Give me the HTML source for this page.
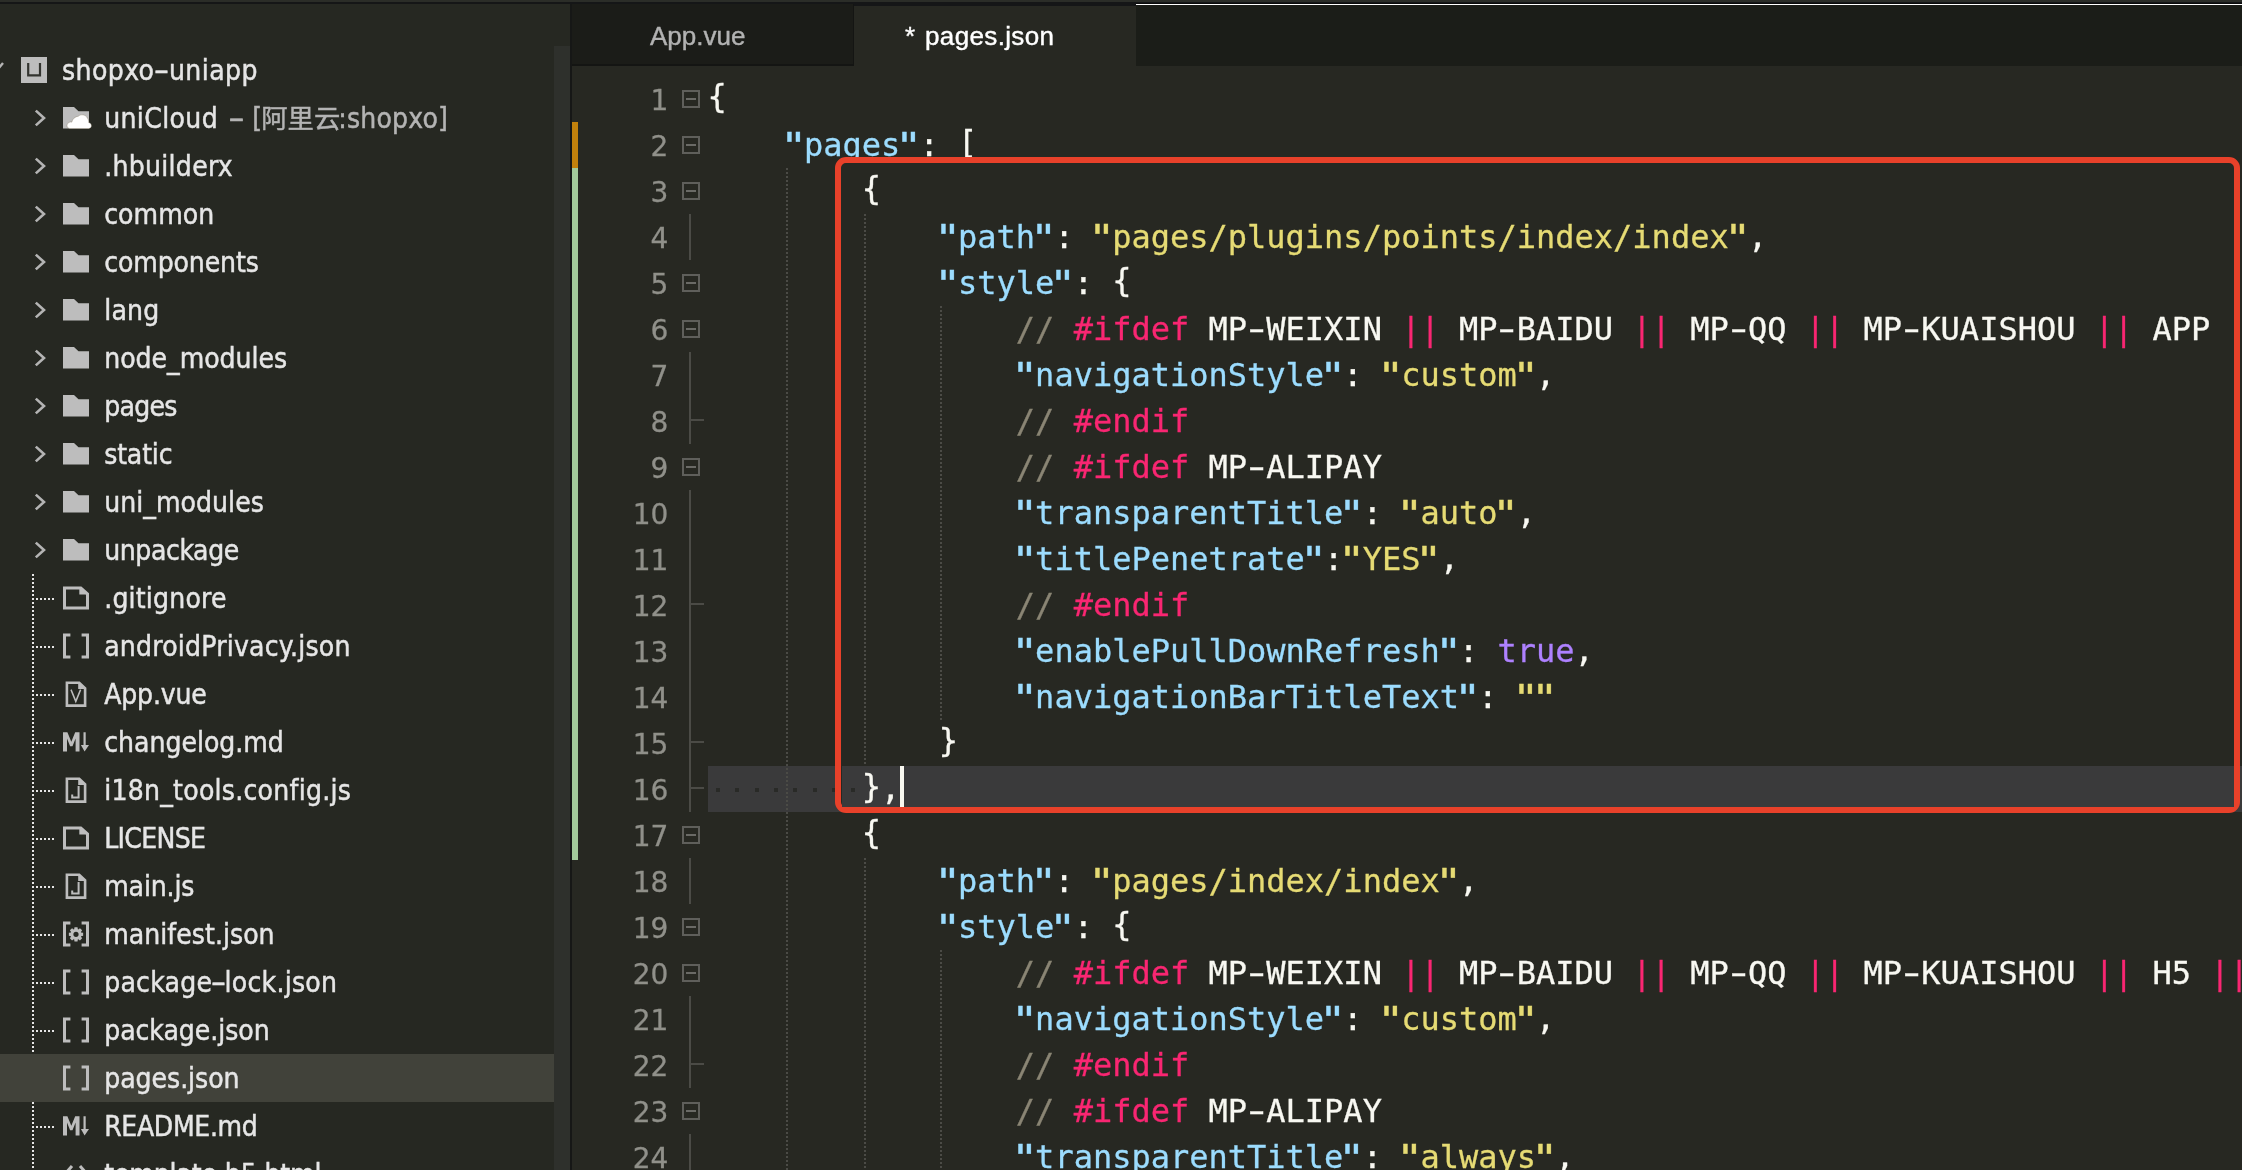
<!DOCTYPE html><html><head><meta charset="utf-8"><title>pages.json</title><style>
*{margin:0;padding:0;box-sizing:border-box}
html,body{width:2242px;height:1170px;overflow:hidden;background:#272822}
body{position:relative;font-family:"DejaVu Sans Condensed","DejaVu Sans","Liberation Sans","Noto Sans CJK SC",sans-serif}
.abs{position:absolute}
#side{will-change:transform;position:absolute;left:0;top:4px;width:570px;height:1166px;background:#262822;overflow:hidden}
.row{position:absolute;left:0;width:554px;height:48px}
.row .t{position:absolute;top:0.5px;line-height:47px;font-size:28px;color:#e6e6e6;white-space:nowrap;font-stretch:condensed;-webkit-text-stroke:0.45px}
.row svg{position:absolute;overflow:visible}
.sel{background:#41423a}
.dim{color:#b4b4b4}
.hy{display:inline-block}
.cj{font-family:"Noto Sans CJK SC",sans-serif;font-size:26.3px;line-height:1}
#ed{will-change:transform;position:absolute;left:572px;top:66px;width:1670px;height:1104px;background:#272822;overflow:hidden}
.ln{position:absolute;left:0;width:96.3px;-webkit-text-stroke:0.3px;text-align:right;font-family:"DejaVu Sans","Liberation Sans",sans-serif;font-size:28px;line-height:46px;color:#90908a;height:46px}
.cl{position:absolute;left:135.6px;height:46px;line-height:46px;font-family:"DejaVu Sans Mono","Liberation Mono",monospace;font-size:32px;white-space:pre;color:#f8f8f2;-webkit-text-stroke:0.3px;transform:scaleY(1.01);transform-origin:0 34px}
.k{color:#9cdcfe}.s{color:#e6db74}.c{color:#8a8574}.p{color:#f92672}.v{color:#ae81ff}
.h{display:inline-block;transform:scaleX(1.55)}.q{display:inline-block;transform:translateX(-1px) scale(1.42,1.12);transform-origin:50% 35%}.b{position:relative;top:-3px}
.fb{position:absolute;left:110px;width:18px;height:18px;border:2px solid #5f5f5b}
.fb:after{content:"";position:absolute;left:2px;top:6px;width:10px;height:2px;background:#6a6a66}
.fv{position:absolute;left:117px;width:2px;height:46px;background:#4b4b46}
.ft{position:absolute;left:117px;width:15px;height:2px;background:#4b4b46}
.g{position:absolute;width:2px;background:repeating-linear-gradient(to bottom,#4b4b46 0 2px,transparent 2px 4px)}
.tab{-webkit-text-stroke:0.4px;will-change:transform;position:absolute;font-family:"Liberation Sans",sans-serif;font-size:26px;white-space:nowrap}
</style></head><body>
<div class="abs" style="left:0;top:0;width:2242px;height:2px;background:#2b2d28"></div>
<div class="abs" style="left:0;top:2px;width:2242px;height:4px;background:#151617"></div>
<div class="abs" style="left:0;top:4px;width:854px;height:2px;background:#1b1c18"></div>
<div id="side">
<div class="abs" style="left:554px;top:42px;width:16px;height:1124px;background:#2e302c"></div>
<div class="abs" style="left:32px;top:570px;width:2px;height:600px;background:repeating-linear-gradient(to bottom,#e6e6e6 0 2px,transparent 2px 4px)"></div>
<div class="abs" style="left:36px;top:594px;width:18px;height:2px;background:repeating-linear-gradient(to right,#e6e6e6 0 2px,transparent 2px 4px)"></div>
<div class="abs" style="left:36px;top:642px;width:18px;height:2px;background:repeating-linear-gradient(to right,#e6e6e6 0 2px,transparent 2px 4px)"></div>
<div class="abs" style="left:36px;top:690px;width:18px;height:2px;background:repeating-linear-gradient(to right,#e6e6e6 0 2px,transparent 2px 4px)"></div>
<div class="abs" style="left:36px;top:738px;width:18px;height:2px;background:repeating-linear-gradient(to right,#e6e6e6 0 2px,transparent 2px 4px)"></div>
<div class="abs" style="left:36px;top:786px;width:18px;height:2px;background:repeating-linear-gradient(to right,#e6e6e6 0 2px,transparent 2px 4px)"></div>
<div class="abs" style="left:36px;top:834px;width:18px;height:2px;background:repeating-linear-gradient(to right,#e6e6e6 0 2px,transparent 2px 4px)"></div>
<div class="abs" style="left:36px;top:882px;width:18px;height:2px;background:repeating-linear-gradient(to right,#e6e6e6 0 2px,transparent 2px 4px)"></div>
<div class="abs" style="left:36px;top:930px;width:18px;height:2px;background:repeating-linear-gradient(to right,#e6e6e6 0 2px,transparent 2px 4px)"></div>
<div class="abs" style="left:36px;top:978px;width:18px;height:2px;background:repeating-linear-gradient(to right,#e6e6e6 0 2px,transparent 2px 4px)"></div>
<div class="abs" style="left:36px;top:1026px;width:18px;height:2px;background:repeating-linear-gradient(to right,#e6e6e6 0 2px,transparent 2px 4px)"></div>
<div class="abs" style="left:36px;top:1074px;width:18px;height:2px;background:repeating-linear-gradient(to right,#e6e6e6 0 2px,transparent 2px 4px)"></div>
<div class="abs" style="left:36px;top:1122px;width:18px;height:2px;background:repeating-linear-gradient(to right,#e6e6e6 0 2px,transparent 2px 4px)"></div>
<div class="abs" style="left:36px;top:1170px;width:18px;height:2px;background:repeating-linear-gradient(to right,#e6e6e6 0 2px,transparent 2px 4px)"></div>
<div class="row" style="top:42px">
<svg style="left:-9px;top:16px" width="14" height="12" viewBox="0 0 14 12"><path d="M0 3 L5.5 9 L12 1" fill="none" stroke="#b4b4b4" stroke-width="2.4"/></svg>
<svg style="left:21px;top:11px" width="26" height="26" viewBox="0 0 26 26"><rect width="26" height="26" fill="#bdbdbd"/><path d="M7.2 6 V18.4 H19 V6" fill="none" stroke="#33342f" stroke-width="2.2"/></svg>
<span class="t" style="left:62px;letter-spacing:0.417px">shopxo<span class="hy" style="margin:0 2.5px;transform:scaleX(1.7)">-</span>uniapp</span>
</div>
<div class="row" style="top:90px">
<svg style="left:33px;top:14px" width="14" height="20" viewBox="0 0 14 20"><path d="M2.8 2.6 L11 10 L2.8 17.4" fill="none" stroke="#b4b4b4" stroke-width="2.6" stroke-linecap="butt" stroke-linejoin="miter"/></svg>
<svg style="left:63px;top:13px" width="30" height="24" viewBox="0 0 30 24"><path d="M0 0 H11 L15.5 4.2 H26 V21.5 H0 Z" fill="#bdbdbd"/><path d="M8 21.6 C4.6 21.6 3.6 19.6 4.2 17.6 C4.8 15.6 6.8 14.6 8.8 15.2 C9.4 12 12 9.6 15.4 9.2 C18 7 22.4 7.4 24.4 11 C25.4 12.6 25.8 14.4 25.6 15.6 C27.8 16.2 28.8 17.8 28.4 19.4 C28 20.8 26.8 21.6 25 21.6 Z" fill="#ffffff" stroke="#6b5a3c" stroke-opacity=".35" stroke-width=".8"/></svg>
<span class="t" style="left:104.2px;letter-spacing:0.000px"><span style="letter-spacing:.37px">uniCloud</span><span class="dim"><span class="hy" style="margin:0 11px 0 14px;transform:scaleX(1.8)">-</span>[<span class="cj" style="margin:0 -2px 0 -0.7px">阿里云</span><span style="letter-spacing:.2px">:shopxo]</span></span></span>
</div>
<div class="row" style="top:138px">
<svg style="left:33px;top:14px" width="14" height="20" viewBox="0 0 14 20"><path d="M2.8 2.6 L11 10 L2.8 17.4" fill="none" stroke="#b4b4b4" stroke-width="2.6" stroke-linecap="butt" stroke-linejoin="miter"/></svg>
<svg style="left:63px;top:13px" width="26" height="22" viewBox="0 0 26 22"><path d="M0 0 H11 L15.5 4.2 H26 V21.5 H0 Z" fill="#bdbdbd"/></svg>
<span class="t" style="left:104.2px;letter-spacing:0.289px">.hbuilderx</span>
</div>
<div class="row" style="top:186px">
<svg style="left:33px;top:14px" width="14" height="20" viewBox="0 0 14 20"><path d="M2.8 2.6 L11 10 L2.8 17.4" fill="none" stroke="#b4b4b4" stroke-width="2.6" stroke-linecap="butt" stroke-linejoin="miter"/></svg>
<svg style="left:63px;top:13px" width="26" height="22" viewBox="0 0 26 22"><path d="M0 0 H11 L15.5 4.2 H26 V21.5 H0 Z" fill="#bdbdbd"/></svg>
<span class="t" style="left:104.2px;letter-spacing:0.080px">common</span>
</div>
<div class="row" style="top:234px">
<svg style="left:33px;top:14px" width="14" height="20" viewBox="0 0 14 20"><path d="M2.8 2.6 L11 10 L2.8 17.4" fill="none" stroke="#b4b4b4" stroke-width="2.6" stroke-linecap="butt" stroke-linejoin="miter"/></svg>
<svg style="left:63px;top:13px" width="26" height="22" viewBox="0 0 26 22"><path d="M0 0 H11 L15.5 4.2 H26 V21.5 H0 Z" fill="#bdbdbd"/></svg>
<span class="t" style="left:104.2px;letter-spacing:-0.111px">components</span>
</div>
<div class="row" style="top:282px">
<svg style="left:33px;top:14px" width="14" height="20" viewBox="0 0 14 20"><path d="M2.8 2.6 L11 10 L2.8 17.4" fill="none" stroke="#b4b4b4" stroke-width="2.6" stroke-linecap="butt" stroke-linejoin="miter"/></svg>
<svg style="left:63px;top:13px" width="26" height="22" viewBox="0 0 26 22"><path d="M0 0 H11 L15.5 4.2 H26 V21.5 H0 Z" fill="#bdbdbd"/></svg>
<span class="t" style="left:104.2px;letter-spacing:0.200px">lang</span>
</div>
<div class="row" style="top:330px">
<svg style="left:33px;top:14px" width="14" height="20" viewBox="0 0 14 20"><path d="M2.8 2.6 L11 10 L2.8 17.4" fill="none" stroke="#b4b4b4" stroke-width="2.6" stroke-linecap="butt" stroke-linejoin="miter"/></svg>
<svg style="left:63px;top:13px" width="26" height="22" viewBox="0 0 26 22"><path d="M0 0 H11 L15.5 4.2 H26 V21.5 H0 Z" fill="#bdbdbd"/></svg>
<span class="t" style="left:104.2px;letter-spacing:0.000px">node_modules</span>
</div>
<div class="row" style="top:378px">
<svg style="left:33px;top:14px" width="14" height="20" viewBox="0 0 14 20"><path d="M2.8 2.6 L11 10 L2.8 17.4" fill="none" stroke="#b4b4b4" stroke-width="2.6" stroke-linecap="butt" stroke-linejoin="miter"/></svg>
<svg style="left:63px;top:13px" width="26" height="22" viewBox="0 0 26 22"><path d="M0 0 H11 L15.5 4.2 H26 V21.5 H0 Z" fill="#bdbdbd"/></svg>
<span class="t" style="left:104.2px;letter-spacing:-0.700px">pages</span>
</div>
<div class="row" style="top:426px">
<svg style="left:33px;top:14px" width="14" height="20" viewBox="0 0 14 20"><path d="M2.8 2.6 L11 10 L2.8 17.4" fill="none" stroke="#b4b4b4" stroke-width="2.6" stroke-linecap="butt" stroke-linejoin="miter"/></svg>
<svg style="left:63px;top:13px" width="26" height="22" viewBox="0 0 26 22"><path d="M0 0 H11 L15.5 4.2 H26 V21.5 H0 Z" fill="#bdbdbd"/></svg>
<span class="t" style="left:104.2px;letter-spacing:-0.160px">static</span>
</div>
<div class="row" style="top:474px">
<svg style="left:33px;top:14px" width="14" height="20" viewBox="0 0 14 20"><path d="M2.8 2.6 L11 10 L2.8 17.4" fill="none" stroke="#b4b4b4" stroke-width="2.6" stroke-linecap="butt" stroke-linejoin="miter"/></svg>
<svg style="left:63px;top:13px" width="26" height="22" viewBox="0 0 26 22"><path d="M0 0 H11 L15.5 4.2 H26 V21.5 H0 Z" fill="#bdbdbd"/></svg>
<span class="t" style="left:104.2px;letter-spacing:0.060px">uni_modules</span>
</div>
<div class="row" style="top:522px">
<svg style="left:33px;top:14px" width="14" height="20" viewBox="0 0 14 20"><path d="M2.8 2.6 L11 10 L2.8 17.4" fill="none" stroke="#b4b4b4" stroke-width="2.6" stroke-linecap="butt" stroke-linejoin="miter"/></svg>
<svg style="left:63px;top:13px" width="26" height="22" viewBox="0 0 26 22"><path d="M0 0 H11 L15.5 4.2 H26 V21.5 H0 Z" fill="#bdbdbd"/></svg>
<span class="t" style="left:104.2px;letter-spacing:-0.400px">unpackage</span>
</div>
<div class="row" style="top:570px">
<svg style="left:63px;top:12px" width="26" height="24" viewBox="0 0 26 24"><path d="M1.5 1.9 H17.8 L24.5 8 V22 H1.5 Z" fill="none" stroke="#bdbdbd" stroke-width="3"/><path d="M16.3 1.5 V8.6 H25 Z" fill="#bdbdbd"/></svg>
<span class="t" style="left:104.2px;letter-spacing:0.200px">.gitignore</span>
</div>
<div class="row" style="top:618px">
<svg style="left:63px;top:11px" width="26" height="26" viewBox="0 0 26 26"><path d="M7.4 1.9 H1.5 V24.1 H7.4 M18.6 1.9 H24.5 V24.1 H18.6" fill="none" stroke="#bdbdbd" stroke-width="3"/></svg>
<span class="t" style="left:104.2px;letter-spacing:0.222px">androidPrivacy.json</span>
</div>
<div class="row" style="top:666px">
<svg style="left:65px;top:11px" width="22" height="26" viewBox="0 0 22 26"><path d="M1.9 1.7 H14.2 L20.1 7.2 V24.6 H1.9 Z" fill="none" stroke="#bdbdbd" stroke-width="2.6"/><path d="M13.2 1.4 V8 H20.8 Z" fill="#bdbdbd"/><path d="M6 8.6 L10.8 20.4 L15.6 8.6" fill="none" stroke="#bdbdbd" stroke-width="1.5"/></svg>
<span class="t" style="left:104.2px;letter-spacing:-0.167px">App.vue</span>
</div>
<div class="row" style="top:714px">
<svg style="left:63px;top:14px" width="27" height="20" viewBox="0 0 27 20"><path d="M0 19.6 V0.2 H4.4 L8.3 9.8 L12.2 0.2 H16.5 V19.6 H12.6 V6.6 L9.5 14.2 H7.1 L4 6.6 V19.6 Z" fill="#bdbdbd"/><path d="M20.5 0.2 H22.7 V13 H26 L21.6 19.6 L17.9 13 H20.5 Z" fill="#bdbdbd"/></svg>
<span class="t" style="left:104.2px;letter-spacing:0.000px">changelog.md</span>
</div>
<div class="row" style="top:762px">
<svg style="left:65px;top:11px" width="22" height="26" viewBox="0 0 22 26"><path d="M1.9 1.7 H14.2 L20.1 7.2 V24.6 H1.9 Z" fill="none" stroke="#bdbdbd" stroke-width="2.6"/><path d="M13.2 1.4 V8 H20.8 Z" fill="#bdbdbd"/><path d="M13.6 9 V20.6 H7.2 V17.4" fill="none" stroke="#bdbdbd" stroke-width="2"/></svg>
<span class="t" style="left:104.2px;letter-spacing:0.263px">i18n_tools.config.js</span>
</div>
<div class="row" style="top:810px">
<svg style="left:63px;top:12px" width="26" height="24" viewBox="0 0 26 24"><path d="M1.5 1.9 H17.8 L24.5 8 V22 H1.5 Z" fill="none" stroke="#bdbdbd" stroke-width="3"/><path d="M16.3 1.5 V8.6 H25 Z" fill="#bdbdbd"/></svg>
<span class="t" style="left:104.2px;letter-spacing:-0.667px">LICENSE</span>
</div>
<div class="row" style="top:858px">
<svg style="left:65px;top:11px" width="22" height="26" viewBox="0 0 22 26"><path d="M1.9 1.7 H14.2 L20.1 7.2 V24.6 H1.9 Z" fill="none" stroke="#bdbdbd" stroke-width="2.6"/><path d="M13.2 1.4 V8 H20.8 Z" fill="#bdbdbd"/><path d="M13.6 9 V20.6 H7.2 V17.4" fill="none" stroke="#bdbdbd" stroke-width="2"/></svg>
<span class="t" style="left:104.2px;letter-spacing:-0.133px">main.js</span>
</div>
<div class="row" style="top:906px">
<svg style="left:63px;top:11px" width="26" height="26" viewBox="0 0 26 26"><path d="M7.4 1.9 H1.5 V24.1 H7.4 M18.6 1.9 H24.5 V24.1 H18.6" fill="none" stroke="#bdbdbd" stroke-width="3"/><path d="M20.14 11.78 L20.14 14.82 L18.07 15.15 L17.90 15.58 L19.12 17.27 L16.97 19.42 L15.28 18.20 L14.85 18.37 L14.52 20.44 L11.48 20.44 L11.15 18.37 L10.72 18.20 L9.03 19.42 L6.88 17.27 L8.10 15.58 L7.93 15.15 L5.86 14.82 L5.86 11.78 L7.93 11.45 L8.10 11.02 L6.88 9.33 L9.03 7.18 L10.72 8.40 L11.15 8.23 L11.48 6.16 L14.52 6.16 L14.85 8.23 L15.28 8.40 L16.97 7.18 L19.12 9.33 L17.90 11.02 L18.07 11.45 Z M15.6 13.3 A2.6 2.6 0 1 0 10.4 13.3 A2.6 2.6 0 1 0 15.6 13.3 Z" fill="#bdbdbd" fill-rule="evenodd"/></svg>
<span class="t" style="left:104.2px;letter-spacing:0.050px">manifest.json</span>
</div>
<div class="row" style="top:954px">
<svg style="left:63px;top:11px" width="26" height="26" viewBox="0 0 26 26"><path d="M7.4 1.9 H1.5 V24.1 H7.4 M18.6 1.9 H24.5 V24.1 H18.6" fill="none" stroke="#bdbdbd" stroke-width="3"/></svg>
<span class="t" style="left:104.2px;letter-spacing:0.250px">package<span class="hy" style="margin:0 1.5px;transform:scaleX(1.7)">-</span>lock.json</span>
</div>
<div class="row" style="top:1002px">
<svg style="left:63px;top:11px" width="26" height="26" viewBox="0 0 26 26"><path d="M7.4 1.9 H1.5 V24.1 H7.4 M18.6 1.9 H24.5 V24.1 H18.6" fill="none" stroke="#bdbdbd" stroke-width="3"/></svg>
<span class="t" style="left:104.2px;letter-spacing:-0.036px">package.json</span>
</div>
<div class="row sel" style="top:1050px">
<svg style="left:63px;top:11px" width="26" height="26" viewBox="0 0 26 26"><path d="M7.4 1.9 H1.5 V24.1 H7.4 M18.6 1.9 H24.5 V24.1 H18.6" fill="none" stroke="#bdbdbd" stroke-width="3"/></svg>
<span class="t" style="left:104.2px;letter-spacing:-0.022px">pages.json</span>
</div>
<div class="row" style="top:1098px">
<svg style="left:63px;top:14px" width="27" height="20" viewBox="0 0 27 20"><path d="M0 19.6 V0.2 H4.4 L8.3 9.8 L12.2 0.2 H16.5 V19.6 H12.6 V6.6 L9.5 14.2 H7.1 L4 6.6 V19.6 Z" fill="#bdbdbd"/><path d="M20.5 0.2 H22.7 V13 H26 L21.6 19.6 L17.9 13 H20.5 Z" fill="#bdbdbd"/></svg>
<span class="t" style="left:104.2px;letter-spacing:-0.325px">README.md</span>
</div>
<div class="row" style="top:1146px">
<svg style="left:63px;top:14px" width="26" height="20" viewBox="0 0 26 20"><path d="M9 2 L2 10 L9 18 M17 2 L24 10 L17 18" fill="none" stroke="#bdbdbd" stroke-width="3"/></svg>
<span class="t" style="left:104.2px;letter-spacing:-0.120px">template.h5.html</span>
</div>
</div>
<div class="abs" style="left:570px;top:4px;width:2px;height:1166px;background:#161716"></div>
<div class="abs" style="left:572px;top:4px;width:282px;height:60px;background:#1b1c18"></div>
<div class="abs" style="left:572px;top:64px;width:282px;height:2px;background:#141513"></div>
<div class="abs" style="left:854px;top:6px;width:282px;height:60px;background:#272822"></div>
<div class="abs" style="left:1136px;top:3px;width:1106px;height:63px;background:#1b1d18"></div>
<div class="abs" style="left:1136px;top:3px;width:1106px;height:1px;background:#0b0b0b"></div>
<div class="abs" style="left:1136px;top:4px;width:1106px;height:2px;background:linear-gradient(#ffffff 0 1.2px,#7e7f7c 1.2px 1.5px,#1b1d18 1.5px 2px)"></div>
<div class="abs" style="left:853px;top:4px;width:1px;height:62px;background:#141513"></div>
<div class="tab" style="left:650px;top:21.3px;line-height:30px;color:#b2b2b2">App.vue</div>
<div class="tab" style="left:905px;top:21.3px;line-height:30px;color:#ffffff;word-spacing:2px;letter-spacing:.35px">* pages.json</div>
<div id="ed">
<div class="abs" style="left:0;top:56px;width:6px;height:46px;background:#c2810c"></div>
<div class="abs" style="left:0;top:102px;width:6px;height:692px;background:#a2c99a"></div>
<div class="abs" style="left:136px;top:700px;width:1540px;height:46px;background:#3a3a3b"></div>
<div class="g" style="left:214px;top:102px;height:1012px"></div>
<div class="g" style="left:292px;top:148px;height:552px"></div>
<div class="g" style="left:292px;top:792px;height:322px"></div>
<div class="g" style="left:368px;top:240px;height:414px"></div>
<div class="g" style="left:368px;top:884px;height:230px"></div>
<div class="abs" style="left:144.1px;top:722px;width:4px;height:4px;background:#292a27"></div>
<div class="abs" style="left:163.4px;top:722px;width:4px;height:4px;background:#292a27"></div>
<div class="abs" style="left:182.7px;top:722px;width:4px;height:4px;background:#292a27"></div>
<div class="abs" style="left:201.9px;top:722px;width:4px;height:4px;background:#292a27"></div>
<div class="abs" style="left:221.2px;top:722px;width:4px;height:4px;background:#292a27"></div>
<div class="abs" style="left:240.5px;top:722px;width:4px;height:4px;background:#292a27"></div>
<div class="abs" style="left:259.7px;top:722px;width:4px;height:4px;background:#292a27"></div>
<div class="abs" style="left:279.0px;top:722px;width:4px;height:4px;background:#292a27"></div>
<div class="ln" style="top:12px">1</div>
<div class="fb" style="top:24px"></div>
<div class="cl" style="top:9.5px"><span class="b">{</span></div>
<div class="ln" style="top:58px">2</div>
<div class="fb" style="top:70px"></div>
<div class="cl" style="top:55.5px">    <span class="k"><span class="q">"</span>pages<span class="q">"</span></span>: <span class="b">[</span></div>
<div class="abs" style="left:263px;top:91px;width:1405px;height:656px;border:6.5px solid #e8412a;border-radius:11px;background:#272822"></div>
<div class="abs" style="left:269.5px;top:700px;width:1392px;height:40.5px;background:#3a3a3b"></div>
<div class="g" style="left:292px;top:148px;height:552px"></div>
<div class="g" style="left:368px;top:240px;height:414px"></div>
<div class="abs" style="left:279.0px;top:722px;width:4px;height:4px;background:#292a27"></div>
<div class="ln" style="top:104px">3</div>
<div class="fb" style="top:116px"></div>
<div class="cl" style="top:101.5px">        <span class="b">{</span></div>
<div class="ln" style="top:150px">4</div>
<div class="fv" style="top:148px"></div>
<div class="cl" style="top:147.5px">            <span class="k"><span class="q">"</span>path<span class="q">"</span></span>: <span class="s"><span class="q">"</span>pages/plugins/points/index/index<span class="q">"</span></span>,</div>
<div class="ln" style="top:196px">5</div>
<div class="fb" style="top:208px"></div>
<div class="cl" style="top:193.5px">            <span class="k"><span class="q">"</span>style<span class="q">"</span></span>: <span class="b">{</span></div>
<div class="ln" style="top:242px">6</div>
<div class="fb" style="top:254px"></div>
<div class="cl" style="top:239.5px">                <span class="c">// </span><span class="p">#ifdef</span> MP<span class="h">-</span>WEIXIN <span class="p">||</span> MP<span class="h">-</span>BAIDU <span class="p">||</span> MP<span class="h">-</span>QQ <span class="p">||</span> MP<span class="h">-</span>KUAISHOU <span class="p">||</span> APP</div>
<div class="ln" style="top:288px">7</div>
<div class="fv" style="top:286px"></div>
<div class="cl" style="top:285.5px">                <span class="k"><span class="q">"</span>navigationStyle<span class="q">"</span></span>: <span class="s"><span class="q">"</span>custom<span class="q">"</span></span>,</div>
<div class="ln" style="top:334px">8</div>
<div class="fv" style="top:332px"></div>
<div class="ft" style="top:353px"></div>
<div class="cl" style="top:331.5px">                <span class="c">// </span><span class="p">#endif</span></div>
<div class="ln" style="top:380px">9</div>
<div class="fb" style="top:392px"></div>
<div class="cl" style="top:377.5px">                <span class="c">// </span><span class="p">#ifdef</span> MP<span class="h">-</span>ALIPAY</div>
<div class="ln" style="top:426px">10</div>
<div class="fv" style="top:424px"></div>
<div class="cl" style="top:423.5px">                <span class="k"><span class="q">"</span>transparentTitle<span class="q">"</span></span>: <span class="s"><span class="q">"</span>auto<span class="q">"</span></span>,</div>
<div class="ln" style="top:472px">11</div>
<div class="fv" style="top:470px"></div>
<div class="cl" style="top:469.5px">                <span class="k"><span class="q">"</span>titlePenetrate<span class="q">"</span></span>:<span class="s"><span class="q">"</span>YES<span class="q">"</span></span>,</div>
<div class="ln" style="top:518px">12</div>
<div class="fv" style="top:516px"></div>
<div class="ft" style="top:537px"></div>
<div class="cl" style="top:515.5px">                <span class="c">// </span><span class="p">#endif</span></div>
<div class="ln" style="top:564px">13</div>
<div class="fv" style="top:562px"></div>
<div class="cl" style="top:561.5px">                <span class="k"><span class="q">"</span>enablePullDownRefresh<span class="q">"</span></span>: <span class="v">true</span>,</div>
<div class="ln" style="top:610px">14</div>
<div class="fv" style="top:608px"></div>
<div class="cl" style="top:607.5px">                <span class="k"><span class="q">"</span>navigationBarTitleText<span class="q">"</span></span>: <span class="s"><span class="q">"</span><span class="q">"</span></span></div>
<div class="ln" style="top:656px">15</div>
<div class="fv" style="top:654px"></div>
<div class="ft" style="top:675px"></div>
<div class="cl" style="top:653.5px">            <span class="b">}</span></div>
<div class="ln" style="top:702px">16</div>
<div class="fv" style="top:700px"></div>
<div class="ft" style="top:721px"></div>
<div class="cl" style="top:699.5px">        <span class="b">}</span>,</div>
<div class="ln" style="top:748px">17</div>
<div class="fb" style="top:760px"></div>
<div class="cl" style="top:745.5px">        <span class="b">{</span></div>
<div class="ln" style="top:794px">18</div>
<div class="fv" style="top:792px"></div>
<div class="cl" style="top:791.5px">            <span class="k"><span class="q">"</span>path<span class="q">"</span></span>: <span class="s"><span class="q">"</span>pages/index/index<span class="q">"</span></span>,</div>
<div class="ln" style="top:840px">19</div>
<div class="fb" style="top:852px"></div>
<div class="cl" style="top:837.5px">            <span class="k"><span class="q">"</span>style<span class="q">"</span></span>: <span class="b">{</span></div>
<div class="ln" style="top:886px">20</div>
<div class="fb" style="top:898px"></div>
<div class="cl" style="top:883.5px">                <span class="c">// </span><span class="p">#ifdef</span> MP<span class="h">-</span>WEIXIN <span class="p">||</span> MP<span class="h">-</span>BAIDU <span class="p">||</span> MP<span class="h">-</span>QQ <span class="p">||</span> MP<span class="h">-</span>KUAISHOU <span class="p">||</span> H5 <span class="p">||</span> APP</div>
<div class="ln" style="top:932px">21</div>
<div class="fv" style="top:930px"></div>
<div class="cl" style="top:929.5px">                <span class="k"><span class="q">"</span>navigationStyle<span class="q">"</span></span>: <span class="s"><span class="q">"</span>custom<span class="q">"</span></span>,</div>
<div class="ln" style="top:978px">22</div>
<div class="fv" style="top:976px"></div>
<div class="ft" style="top:997px"></div>
<div class="cl" style="top:975.5px">                <span class="c">// </span><span class="p">#endif</span></div>
<div class="ln" style="top:1024px">23</div>
<div class="fb" style="top:1036px"></div>
<div class="cl" style="top:1021.5px">                <span class="c">// </span><span class="p">#ifdef</span> MP<span class="h">-</span>ALIPAY</div>
<div class="ln" style="top:1070px">24</div>
<div class="fv" style="top:1068px"></div>
<div class="cl" style="top:1067.5px">                <span class="k"><span class="q">"</span>transparentTitle<span class="q">"</span></span>: <span class="s"><span class="q">"</span>always<span class="q">"</span></span>,</div>
<div class="abs" style="left:328.2px;top:700px;width:4px;height:40.5px;background:#f8f8f0"></div>
</div>
</body></html>
